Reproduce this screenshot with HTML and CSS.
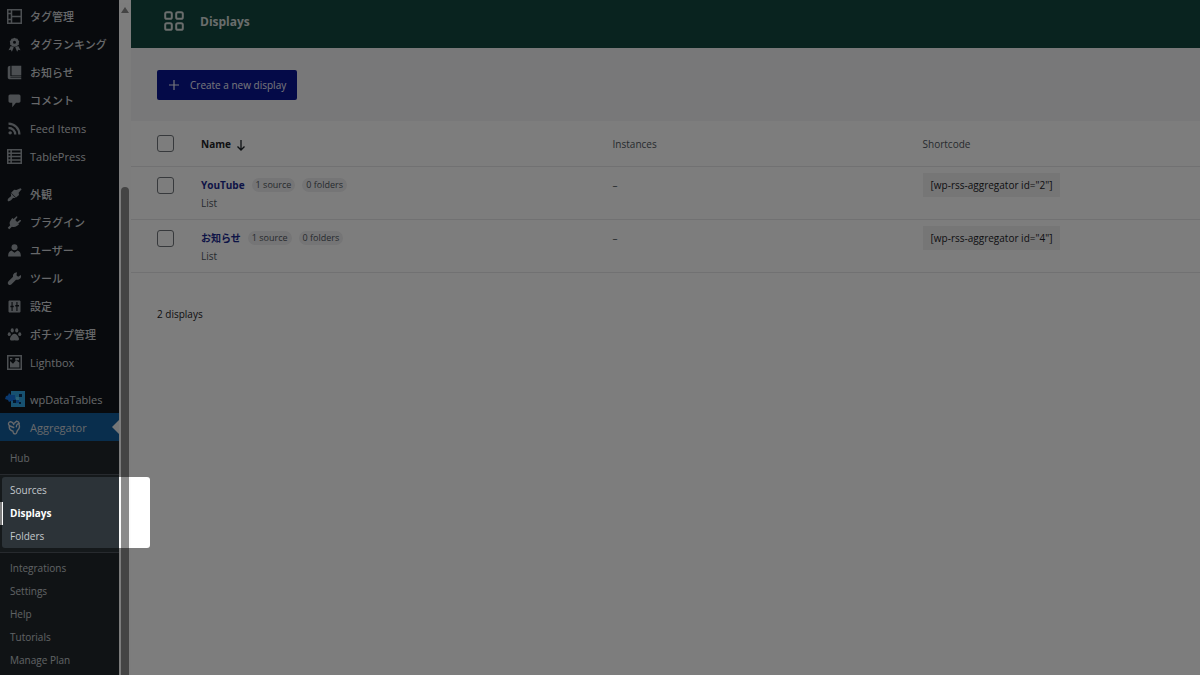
FILE: index.html
```html
<!DOCTYPE html>
<html lang="ja">
<head>
  <meta charset="UTF-8" />
  <meta name="viewport" content="width=device-width, initial-scale=1" />
  <title>Displays</title>
  <link rel="stylesheet" href="styles.css">
</head>
<body>
  <div class="page">
    <nav class="sidebar" aria-label="Menu">
      <ul class="menu">
        <li><a href="#"><svg class="icon" viewBox="0 0 20 20"><path fill="none" stroke="currentColor" stroke-width="2" d="M1 1h18v18H1zM6 2v17M6 10h13M2 6h4M2 14h4"/></svg>タグ管理</a></li>
        <li><a href="#"><svg class="icon" viewBox="0 0 20 20"><path fill-rule="evenodd" d="M10 1l2 1 2 .3 1 2 1.300 1.700-.6 2 .3 2-2 1.200-1.500 1.500L10 13l-2.500-.3L6 11.200 4 10l.3-2-.6-2L5 4.300l1-2L8 2zM10 5a2 2 0 1 0 0 4 2 2 0 0 0 0-4zM5 12l4 1.500L6.500 19.500 5 17l-3 .5zM15 12l-4 1.500 2.500 6 1.500-2.500 3 .5z"/></svg>タグランキング</a></li>
        <li><a href="#"><svg class="icon" viewBox="0 0 20 20"><path d="M6 1h13v13H6zM4.500 1v13.500H19v1H4.500v1H19V19H4c-1.800 0-3-1-3-2.500V4c0-1.800 1.500-3 3.500-3z"/></svg>お知らせ</a></li>
        <li><a href="#"><svg class="icon" viewBox="0 0 20 20"><path d="M4 2h12c1 0 2 1 2 2v7c0 1-1 2-2 2h-4l-5 6v-6H4c-1 0-2-1-2-2V4c0-1 1-2 2-2z"/></svg>コメント</a></li>
        <li><a href="#"><svg class="icon" viewBox="0 0 20 20"><path fill="none" stroke="currentColor" stroke-width="3" d="M2 3.500c8 0 14.500 6.500 14.500 14.500M2 9c5 0 9 4 9 9"/><circle cx="4.200" cy="15.800" r="2.300"/></svg>Feed Items</a></li>
        <li><a href="#"><svg class="icon" viewBox="0 0 20 20"><path fill="none" stroke="currentColor" stroke-width="2" d="M1 1h18v18H1zM1 5.500h18M1 10h18M1 14.500h18M5.500 2v17"/></svg>TablePress</a></li>
      </ul>
      <ul class="menu">
        <li><a href="#"><svg class="icon" viewBox="0 0 20 20"><path d="M9.500 3.500l3 .5 5.500-2.500 1.500 1.500-4 4.500.5 3-4 3.500-6.500-6.500zM5 8l6.500 6.500-3.500.2c-1.500 1.500-3 4-5.500 4.300-1.500 0-2-1.500-1.500-2.500 1-2 3.500-3 4.500-4.500z"/></svg>外観</a></li>
        <li><a href="#"><svg class="icon" viewBox="0 0 20 20"><path d="M12.800 1.500c1 .2 1.300 1 .8 1.800L11 6.800l2.500 2.500 3.600-2.600c1-.4 1.800.4 1.500 1.300L15 11.600l1 1.200-3 2c-2 1.500-4.500 1.800-6.500.7L3 19l-2-2 3.300-3.500C3 11.500 3.300 9 5 7l2-3 1.800 1.300z"/></svg>プラグイン</a></li>
        <li><a href="#"><svg class="icon" viewBox="0 0 20 20"><circle cx="10" cy="5.500" r="4"/><path d="M6 10l4 3 4-3c3 1 4.500 3 4.500 8h-17C1.500 13 3 11 6 10z"/></svg>ユーザー</a></li>
        <li><a href="#"><svg class="icon" viewBox="0 0 20 20"><path d="M18.500 5.200l-3.700 2.300-2.200-1.800.8-4.200c-3.500.2-5.900 2.700-5.300 6L2 13.500c-1.500 1.500-1 3.500 0 4.500s2.900 1 4-.2l6-6.100c4.200.8 7.800-2.500 6.500-6.500z"/></svg>ツール</a></li>
        <li><a href="#"><svg class="icon" viewBox="0 0 20 20"><path fill-rule="evenodd" d="M3 2h14l1 1v14l-1 1H3l-1-1V3zM6 4v5H4.500v2H6v5h1.500v-5H9V9H7.500V4zM12.500 4v4H11v2h1.500v6H14v-6h2V8h-2V4z"/></svg>設定</a></li>
        <li><a href="#"><svg class="icon" viewBox="0 0 20 20"><ellipse cx="7" cy="4.500" rx="2.100" ry="2.800"/><ellipse cx="13" cy="4.500" rx="2.100" ry="2.800"/><ellipse cx="3" cy="9.500" rx="2" ry="2.500"/><ellipse cx="17" cy="9.500" rx="2" ry="2.500"/><path d="M10 9c3 0 6 4.500 6 7s-3 2.500-6 1.500c-3 1-6 1-6-1.500s3-7 6-7z"/></svg>ポチップ管理</a></li>
        <li><a href="#"><svg class="icon" viewBox="0 0 20 20"><path fill="none" stroke="currentColor" stroke-width="2" d="M1 1h18v18H1z"/><path d="M4 16.500V8l4 3.500 4-4.500 4.500 3v6.500zM11 4h5v3h-5zM4 4h3v2H4z"/></svg>Lightbox</a></li>
      </ul>
      <ul class="menu">
        <li><a href="#"><svg class="icon icon-tables" viewBox="0 0 20 18"><path fill="#2fa6e4" d="M6 1h14v16H6z"/><path fill="#1674e0" d="M4 3l2 2h4v4h4v4h-4v-2H6l-2 1-1-2-3-1 1-3 2-.5z"/><path fill="#0c2f58" d="M14 4h3v3h-3zM8 10h3v3H8zM14 12h2v2h-2z"/><path fill="#5cc8ee" d="M11 7h3v3h-3z"/></svg>wpDataTables</a></li>
        <li class="active"><a href="#"><svg class="icon" viewBox="0 0 20 20"><g fill="none" stroke="currentColor" stroke-width="1.800" stroke-linecap="round" stroke-linejoin="round"><path d="M9 6C8 3 5 1.500 3 3s-1 4 1 5l5 2M3 8c-.5 4 1.500 6 5 7 0 2 1 4 3.500 3.500 2-.5 1-2.500 2.500-4.500 3-3 3.500-6 1.500-9M10 4l3-2.500c2 .5 3 1.500 3.500 3.500-2.500-.5-4 1.500-4 4"/></g></svg>Aggregator</a></li>
      </ul>
      <div class="submenu">
        <ul>
          <li><a href="#">Hub</a></li>
        </ul>
        <ul class="spotlit">
          <li><a href="#">Sources</a></li>
          <li class="current"><a href="#" aria-current="page">Displays</a></li>
          <li><a href="#">Folders</a></li>
          <li class="spotlight" aria-hidden="true"></li>
        </ul>
        <ul>
          <li><a href="#">Integrations</a></li>
          <li><a href="#">Settings</a></li>
          <li><a href="#">Help</a></li>
          <li><a href="#">Tutorials</a></li>
          <li><a href="#">Manage Plan</a></li>
        </ul>
      </div>
    </nav>

    <div class="scrollbar" aria-hidden="true">
      <div class="scroll-arrow"></div>
      <div class="scroll-thumb"></div>
    </div>

    <main class="content">
      <header class="header">
        <svg class="grid-icon" viewBox="0 0 20 20"><g fill="none" stroke="currentColor" stroke-width="1.800"><rect x="2" y="2" width="6" height="6" rx="1.500"/><rect x="12" y="2" width="6" height="6" rx="1.500"/><rect x="2" y="12" width="6" height="6" rx="1.500"/><rect x="12" y="12" width="6" height="6" rx="1.500"/></g></svg>
        <h1>Displays</h1>
      </header>

      <div class="toolbar">
        <button type="button" class="create">
          <svg viewBox="0 0 12 12"><path fill="none" stroke="currentColor" stroke-width="1.200" d="M6 1v10M1 6h10"/></svg>
          Create a new display
        </button>
      </div>

      <table class="displays">
        <thead>
          <tr>
            <th class="col-check"><input type="checkbox" aria-label="Select all" /></th>
            <th class="col-name">Name <svg class="sort" viewBox="0 0 10 12"><path fill="none" stroke="currentColor" stroke-width="1.300" d="M5 1v10M1.500 7.500L5 11l3.500-3.500"/></svg></th>
            <th class="col-instances">Instances</th>
            <th>Shortcode</th>
          </tr>
        </thead>
        <tbody>
          <tr>
            <td><input type="checkbox" aria-label="Select YouTube" /></td>
            <td>
              <div class="name"><a href="#">YouTube</a><span class="pill">1 source</span><span class="pill">0 folders</span></div>
              <div class="type">List</div>
            </td>
            <td>–</td>
            <td><code>[wp-rss-aggregator id="2"]</code></td>
          </tr>
          <tr>
            <td><input type="checkbox" aria-label="Select お知らせ" /></td>
            <td>
              <div class="name"><a href="#">お知らせ</a><span class="pill">1 source</span><span class="pill">0 folders</span></div>
              <div class="type">List</div>
            </td>
            <td>–</td>
            <td><code>[wp-rss-aggregator id="4"]</code></td>
          </tr>
        </tbody>
      </table>

      <p class="count">2 displays</p>
    </main>
  </div>
</body>
</html>
```
FILE: styles.css
```css
* {
  box-sizing: border-box;
}
body {
  margin: 0;
  font-family: "Open Sans", "Noto Sans CJK JP", sans-serif;
  font-size: 10px;
  color: #1d2327;
}
ul {
  list-style: none;
  margin: 0;
  padding: 0;
}
a {
  text-decoration: none;
}
.page {
  display: flex;
  height: 100vh;
  overflow: hidden;
  background: #fff;
}

/* Sidebar */
.sidebar {
  flex: none;
  width: 119px;
  padding-top: 2px;
  background: #11161c;
}
.menu {
  margin-bottom: 9px;
}
.menu:first-child {
  margin-bottom: 10px;
}
.menu a {
  display: flex;
  align-items: center;
  gap: 8px;
  height: 28px;
  padding-left: 7px;
  color: #d2d5d9;
  font-size: 11px;
  font-weight: 500;
  white-space: nowrap;
}
.icon {
  flex: none;
  width: 15px;
  height: 15px;
  fill: currentColor;
  color: #9ca2a7;
}
.icon-tables {
  width: 20px;
  height: 18px;
  margin: 0 -3px 0 -2px;
}
.menu .active {
  position: relative;
  background: #135e9e;
}
.active .icon {
  color: #d2d5d9;
}
.active::after {
  content: "";
  position: absolute;
  right: 0;
  top: 7px;
  border: 7px solid transparent;
  border-left: 0;
  border-right-color: #f0f0f1;
}
.menu:nth-of-type(3) {
  margin-bottom: 0;
}
.submenu {
  height: 100%;
  padding-top: 6px;
  background: #22282c;
}
.submenu a {
  display: block;
  height: 23px;
  padding-left: 10px;
  line-height: 23px;
  color: #c3c8cc;
}
.submenu .spotlit {
  position: relative;
  margin: 4px 0;
  padding: 4px 0;
  border: 1px solid #50575e;
  border-width: 1px 0;
  background: #2c3338;
}
.submenu .current {
  box-shadow: inset 3px 0 #fff;
}
.submenu .current a {
  color: #fff;
  font-weight: 700;
}

/* Dims the whole page except this box */
.spotlight {
  position: absolute;
  z-index: 10;
  left: 2px;
  top: 2px;
  bottom: 4px;
  width: 148px;
  border-radius: 3px;
  box-shadow: 0 0 0 2000px rgba(0, 0, 0, 0.51);
  pointer-events: none;
}

/* Scrollbar */
.scrollbar {
  display: flex;
  flex: none;
  flex-direction: column;
  align-items: center;
  width: 12px;
  margin-top: 3px;
  padding-top: 4px;
  background: #fcfcfc;
}
.scroll-arrow {
  border: 4px solid transparent;
  border-top: 0;
  border-bottom: 6px solid #8b8b8b;
}
.scroll-thumb {
  flex: 1;
  width: 8px;
  margin-top: 174px;
  border-radius: 4px 4px 0 0;
  background: #8b8b8b;
}

/* Content */
.content {
  flex: 1;
}
.header {
  display: flex;
  align-items: center;
  gap: 15px;
  height: 48px;
  padding: 0 32px 6px;
  background: #14483f;
  color: #d8dedd;
}
.header h1 {
  margin: 0;
  font-size: 12px;
  font-weight: 700;
}
.grid-icon {
  width: 22px;
  height: 22px;
}
.toolbar {
  padding: 22px 26px 21px;
  background: #f4f4f7;
}
.create {
  display: flex;
  align-items: center;
  gap: 10px;
  height: 30px;
  padding: 0 11px;
  border: 0;
  border-radius: 2px;
  background: #0a1594;
  color: #f0f1fa;
  font: inherit;
}
.create svg {
  width: 12px;
  height: 12px;
}
.displays {
  width: 100%;
  table-layout: fixed;
  border-collapse: collapse;
}
.displays th {
  height: 45px;
  padding: 1px 0 0;
  border-bottom: 1px solid #e6e7e9;
  color: #50575e;
  font-weight: 500;
  text-align: left;
}
.displays td {
  height: 53px;
  padding: 6px 0 0;
  border-bottom: 1px solid #e6e7e9;
  color: #50575e;
  line-height: 24px;
  vertical-align: top;
}
.displays .col-check {
  width: 70px;
}
.displays .col-name {
  width: 38.5%;
  color: #1d2327;
  font-weight: 700;
}
.displays .col-instances {
  width: 29%;
}
.sort {
  width: 10px;
  height: 12px;
  margin-left: 2px;
  vertical-align: middle;
}
.displays input {
  appearance: none;
  display: block;
  width: 17px;
  height: 17px;
  margin: 0 0 0 26px;
  border: 1px solid #70757b;
  border-radius: 3px;
  background: transparent;
}
.displays td input {
  margin-top: 4px;
}
.name {
  display: flex;
  align-items: center;
  gap: 7px;
  height: 24px;
}
.name a {
  color: #1c2a90;
  font-weight: 700;
}
.pill {
  padding: 0 4px;
  border-radius: 7px;
  background: #eeeef0;
  font-size: 9px;
  line-height: 14px;
}
.type {
  line-height: 12px;
}
code {
  display: inline-block;
  padding: 0 8px;
  background: #f0f0f1;
  color: #1d2327;
  font-family: inherit;
  font-size: 10px;
}
.count {
  margin: 33px 26px;
  line-height: 16px;
}
```
